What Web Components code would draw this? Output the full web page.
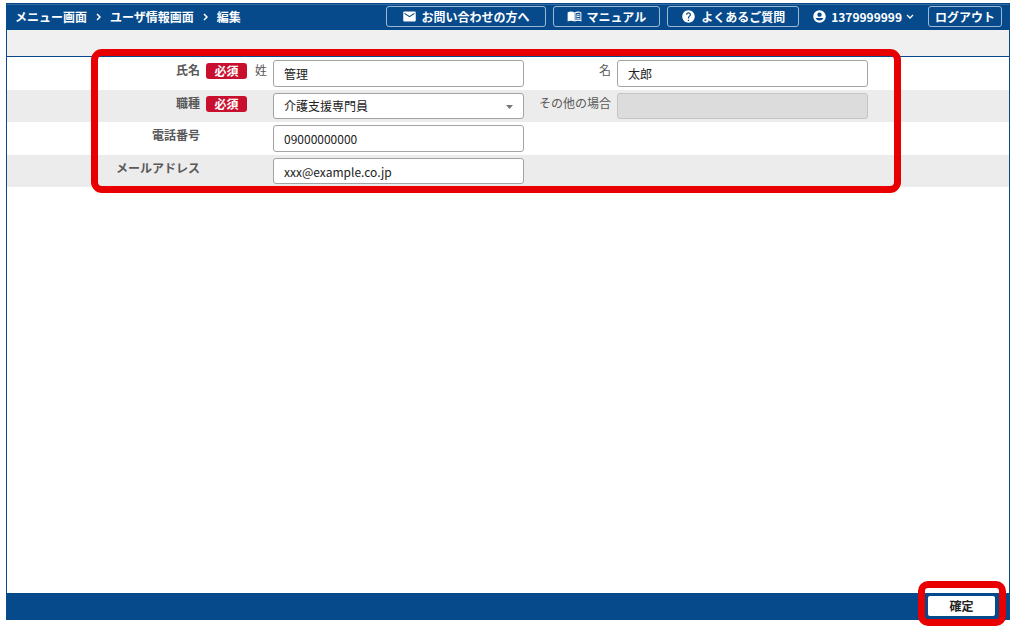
<!DOCTYPE html>
<html lang="ja">
<head>
<meta charset="utf-8">
<meta name="viewport" content="width=device-width, initial-scale=1">
<title>ユーザ情報 編集</title>
<style>
    :root {
        --navy: #064a8b;
        --danger: #c8102e;
        --mark: #e80000;
        --stripe: #ececec;
        --label: #595959;
    }
    body {
        margin: 0;
        background: #fff;
        color: #222;
        font-family: "Noto Sans CJK JP", "Noto Sans", sans-serif;
        font-size: 12px;
        line-height: 20px;
    }
</style>
</head>
<body>
<app-frame>
    <app-header slot="header">
        <bread-crumb slot="start">
            <a href="#menu">メニュー画面</a>
            <a href="#user">ユーザ情報画面</a>
            <span aria-current="page">編集</span>
        </bread-crumb>
        <header-button icon="mail" wide>お問い合わせの方へ</header-button>
        <header-button icon="book">マニュアル</header-button>
        <header-button icon="help">よくあるご質問</header-button>
        <user-menu>1379999999</user-menu>
        <header-button compact>ログアウト</header-button>
    </app-header>
    <user-form></user-form>
    <app-footer slot="footer">確定</app-footer>
</app-frame>

<script>
const ICONS = {
    mail: '<path d="M20 4H4c-1.1 0-2 .9-2 2v12c0 1.1.9 2 2 2h16c1.1 0 2-.9 2-2V6c0-1.100-.9-2-2-2zm0 4l-8 5-8-5V6l8 5 8-5v2z"/>',
    book: '<path d="M1 5.500C4.500 3.600 8.500 3.700 12 5.700V20C8.500 18.300 4.500 18.300 1 19.800z"/><path fill-rule="evenodd" d="M12 5.700c3.500-2 7.500-2.100 11-.2v14.300c-3.500-1.500-7.500-1.500-11 .2zM13.600 6.900v10.800c2.500-.9 5.200-1 7.800-.3V6.500c-2.600-.9-5.300-.7-7.800.4z"/><path d="M14.800 9.200c1.800-.7 3.600-.9 5.500-.5v1.500c-1.900-.4-3.700-.2-5.500.5zm0 2.900c1.800-.7 3.600-.9 5.500-.5v1.500c-1.900-.4-3.700-.2-5.500.5zm0 2.900c1.800-.7 3.600-.9 5.500-.5V16c-1.900-.4-3.700-.2-5.500.5z"/>',
    help: '<path d="M12 2C6.480 2 2 6.480 2 12s4.480 10 10 10 10-4.480 10-10S17.520 2 12 2zm1 17h-2v-2h2v2zm2.070-7.750l-.9.920C13.450 12.900 13 13.500 13 15h-2v-.5c0-1.100.45-2.100 1.170-2.830l1.240-1.260c.37-.36.59-.86.59-1.410 0-1.100-.9-2-2-2s-2 .9-2 2H8c0-2.210 1.790-4 4-4s4 1.790 4 4c0 .88-.36 1.680-.93 2.250z"/>',
    user: '<path fill-rule="evenodd" d="M12 2a10 10 0 1 0 0 20 10 10 0 0 0 0-20zm0 3.500a3.500 3.500 0 1 1 0 7 3.500 3.500 0 0 1 0-7zM5.800 14.500h12.400c-.9 2.700-3.300 4-6.200 4s-5.300-1.300-6.200-4z"/>'
};

class AppFrame extends HTMLElement {
    constructor() {
        super();
        this.attachShadow({ mode: 'open' });
        this.shadowRoot.innerHTML = `
            <style>
                :host {
                    display: flex;
                    box-sizing: border-box;
                    min-height: 100vh;
                    padding: 3px 5px 8px 6px;
                }
                .frame {
                    flex: 1;
                    display: flex;
                    flex-direction: column;
                    border: 1px solid var(--navy);
                }
                .toolbar {
                    height: 26px;
                    background: #f0f0f0;
                    border-bottom: 1px solid var(--navy);
                }
                main { flex: 1; }
            </style>
            <div class="frame">
                <slot name="header"></slot>
                <div class="toolbar"></div>
                <main><slot></slot></main>
                <slot name="footer"></slot>
            </div>
        `;
    }
}

class AppHeader extends HTMLElement {
    constructor() {
        super();
        this.attachShadow({ mode: 'open' });
        this.shadowRoot.innerHTML = `
            <style>
                :host { display: block; }
                header {
                    display: flex;
                    align-items: center;
                    justify-content: space-between;
                    box-sizing: border-box;
                    height: 26px;
                    padding: 2px 7px 3px 8px;
                    background: var(--navy);
                    box-shadow: inset 0 1px #356a9f;
                    color: #fff;
                    font-weight: 700;
                    white-space: nowrap;
                }
                .actions {
                    display: flex;
                    align-items: center;
                    gap: 7px;
                }
            </style>
            <header>
                <slot name="start"></slot>
                <div class="actions"><slot></slot></div>
            </header>
        `;
    }
}

class BreadCrumb extends HTMLElement {
    constructor() {
        super();
        this.attachShadow({ mode: 'open' });
        this.shadowRoot.innerHTML = `
            <style>
                :host { display: block; }
                nav {
                    display: flex;
                    align-items: center;
                    gap: 9px;
                }
                ::slotted(*) {
                    color: inherit;
                    text-decoration: none;
                }
                svg {
                    width: 5px;
                    height: 8px;
                    fill: none;
                    stroke: currentColor;
                    stroke-width: 1.5;
                }
            </style>
            <nav aria-label="パンくず"></nav>
        `;
    }

    connectedCallback() {
        const nav = this.shadowRoot.querySelector('nav');
        nav.innerHTML = '';
        [...this.children].forEach((item, i) => {
            item.slot = `item-${i}`;
            const arrow = i ? '<svg viewBox="0 0 5 8" aria-hidden="true"><path d="M1 1l3 3-3 3"/></svg>' : '';
            nav.insertAdjacentHTML('beforeend', `${arrow}<slot name="item-${i}"></slot>`);
        });
    }
}

class HeaderButton extends HTMLElement {
    constructor() {
        super();
        this.attachShadow({ mode: 'open' });
    }

    connectedCallback() {
        const icon = ICONS[this.getAttribute('icon')];
        this.shadowRoot.innerHTML = `
            <style>
                :host { display: block; }
                :host([compact]) { margin-left: 7px; }
                button {
                    display: flex;
                    align-items: center;
                    gap: 5px;
                    box-sizing: border-box;
                    height: 21px;
                    padding: 0 13px;
                    background: none;
                    border: 1px solid #9db8d2;
                    border-radius: 3px;
                    color: inherit;
                    font: inherit;
                    cursor: pointer;
                }
                :host([wide]) button { padding: 0 15px; }
                :host([compact]) button { padding: 0 6px; }
                svg {
                    width: 15px;
                    height: 15px;
                    fill: currentColor;
                }
            </style>
            <button type="button">
                ${icon ? `<svg viewBox="0 0 24 24" aria-hidden="true">${icon}</svg>` : ''}
                <slot></slot>
            </button>
        `;
    }
}

class UserMenu extends HTMLElement {
    constructor() {
        super();
        this.attachShadow({ mode: 'open' });
        this.shadowRoot.innerHTML = `
            <style>
                :host {
                    display: block;
                    margin-left: 6px;
                }
                button {
                    display: flex;
                    align-items: center;
                    gap: 4px;
                    padding: 0;
                    background: none;
                    border: 0;
                    color: inherit;
                    font: inherit;
                    cursor: pointer;
                }
                .user {
                    width: 15px;
                    height: 15px;
                    fill: currentColor;
                }
                .arrow {
                    width: 8px;
                    height: 6px;
                    fill: none;
                    stroke: currentColor;
                    stroke-width: 1.3;
                }
            </style>
            <button type="button" aria-haspopup="menu">
                <svg class="user" viewBox="0 0 24 24" aria-hidden="true">${ICONS.user}</svg>
                <slot></slot>
                <svg class="arrow" viewBox="0 0 8 6" aria-hidden="true"><path d="M1 1l3 3 3-3"/></svg>
            </button>
        `;
    }
}

class RequiredBadge extends HTMLElement {
    constructor() {
        super();
        this.attachShadow({ mode: 'open' });
        this.shadowRoot.innerHTML = `
            <style>
                :host {
                    display: block;
                    width: 41px;
                    height: 16px;
                    margin-top: 3px;
                    border-radius: 3px;
                    background: var(--danger);
                    color: #fff;
                    font-weight: 700;
                    line-height: 16px;
                    text-align: center;
                }
            </style>
            <slot>必須</slot>
        `;
    }
}

class FormRow extends HTMLElement {
    constructor() {
        super();
        this.attachShadow({ mode: 'open' });
        this.shadowRoot.innerHTML = `
            <style>
                :host {
                    display: grid;
                    grid-template-columns: 193fr 61fr 251fr 81fr 251fr 135fr;
                    column-gap: 6px;
                    box-sizing: border-box;
                    padding: 3px 0;
                    color: var(--label);
                }
                .title, .sub {
                    text-align: right;
                    white-space: nowrap;
                }
                .title { font-weight: 700; }
                .marker {
                    display: flex;
                    align-items: flex-start;
                    justify-content: space-between;
                }
                .field {
                    display: grid;
                    min-width: 0;
                }
            </style>
            <div class="title"><slot name="title"></slot></div>
            <div class="marker"><slot name="marker"></slot></div>
            <div class="field"><slot name="field"></slot></div>
            <div class="sub"><slot name="sub"></slot></div>
            <div class="field"><slot name="sub-field"></slot></div>
        `;
    }
}

class UserForm extends HTMLElement {
    constructor() {
        super();
        this.attachShadow({ mode: 'open' });
        this.shadowRoot.innerHTML = `
            <style>
                :host {
                    display: block;
                    position: relative;
                }
                form-row { height: 33px; }
                form-row:nth-child(even) {
                    height: 32px;
                    background: var(--stripe);
                }
                input, select {
                    box-sizing: border-box;
                    width: 100%;
                    height: 100%;
                    min-width: 0;
                    margin: 0;
                    padding: 0 10px;
                    background: #fff;
                    border: 1px solid #a3a3a3;
                    border-radius: 3px;
                    color: #222;
                    font: inherit;
                    appearance: none;
                }
                input:disabled {
                    background: #dcdcdc;
                    border-color: #c4c4c4;
                }
                .select {
                    display: grid;
                    position: relative;
                }
                .select svg {
                    position: absolute;
                    top: 12px;
                    right: 11px;
                    width: 7px;
                    height: 4px;
                    fill: #777;
                    pointer-events: none;
                }
                .mark {
                    position: absolute;
                    inset: -8px 10.8% -6px 8.4%;
                    border: 7px solid var(--mark);
                    border-radius: 11px;
                    pointer-events: none;
                }
            </style>
            <form>
                <form-row>
                    <label slot="title" for="last-name">氏名</label>
                    <required-badge slot="marker"></required-badge>
                    <label slot="marker" for="last-name">姓</label>
                    <input slot="field" id="last-name" type="text" value="管理">
                    <label slot="sub" for="first-name">名</label>
                    <input slot="sub-field" id="first-name" type="text" value="太郎">
                </form-row>
                <form-row>
                    <label slot="title" for="job">職種</label>
                    <required-badge slot="marker"></required-badge>
                    <div class="select" slot="field">
                        <select id="job"><option>介護支援専門員</option></select>
                        <svg viewBox="0 0 7 4" aria-hidden="true"><path d="M0 0h7L3.500 4z"/></svg>
                    </div>
                    <label slot="sub" for="job-other">その他の場合</label>
                    <input slot="sub-field" id="job-other" type="text" disabled>
                </form-row>
                <form-row>
                    <label slot="title" for="tel">電話番号</label>
                    <input slot="field" id="tel" type="tel" value="09000000000">
                </form-row>
                <form-row>
                    <label slot="title" for="mail">メールアドレス</label>
                    <input slot="field" id="mail" type="email" value="xxx@example.co.jp">
                </form-row>
            </form>
            <div class="mark"></div>
        `;
    }
}

class AppFooter extends HTMLElement {
    constructor() {
        super();
        this.attachShadow({ mode: 'open' });
        this.shadowRoot.innerHTML = `
            <style>
                :host { display: block; }
                footer {
                    display: flex;
                    align-items: center;
                    justify-content: flex-end;
                    height: 26px;
                    padding: 0 14px;
                    background: var(--navy);
                }
                .submit { position: relative; }
                button {
                    display: block;
                    width: 67px;
                    height: 20px;
                    padding: 0;
                    background: #fff;
                    border: 0;
                    border-radius: 2px;
                    color: #222;
                    font: inherit;
                    font-weight: 700;
                    cursor: pointer;
                }
                .mark {
                    position: absolute;
                    inset: -15px -11px -10px -10px;
                    border: 7px solid var(--mark);
                    border-radius: 10px;
                    pointer-events: none;
                }
            </style>
            <footer>
                <div class="submit">
                    <button type="button"><slot></slot></button>
                    <div class="mark"></div>
                </div>
            </footer>
        `;
    }
}

customElements.define('app-frame', AppFrame);
customElements.define('app-header', AppHeader);
customElements.define('bread-crumb', BreadCrumb);
customElements.define('header-button', HeaderButton);
customElements.define('user-menu', UserMenu);
customElements.define('required-badge', RequiredBadge);
customElements.define('form-row', FormRow);
customElements.define('user-form', UserForm);
customElements.define('app-footer', AppFooter);
</script>
</body>
</html>
